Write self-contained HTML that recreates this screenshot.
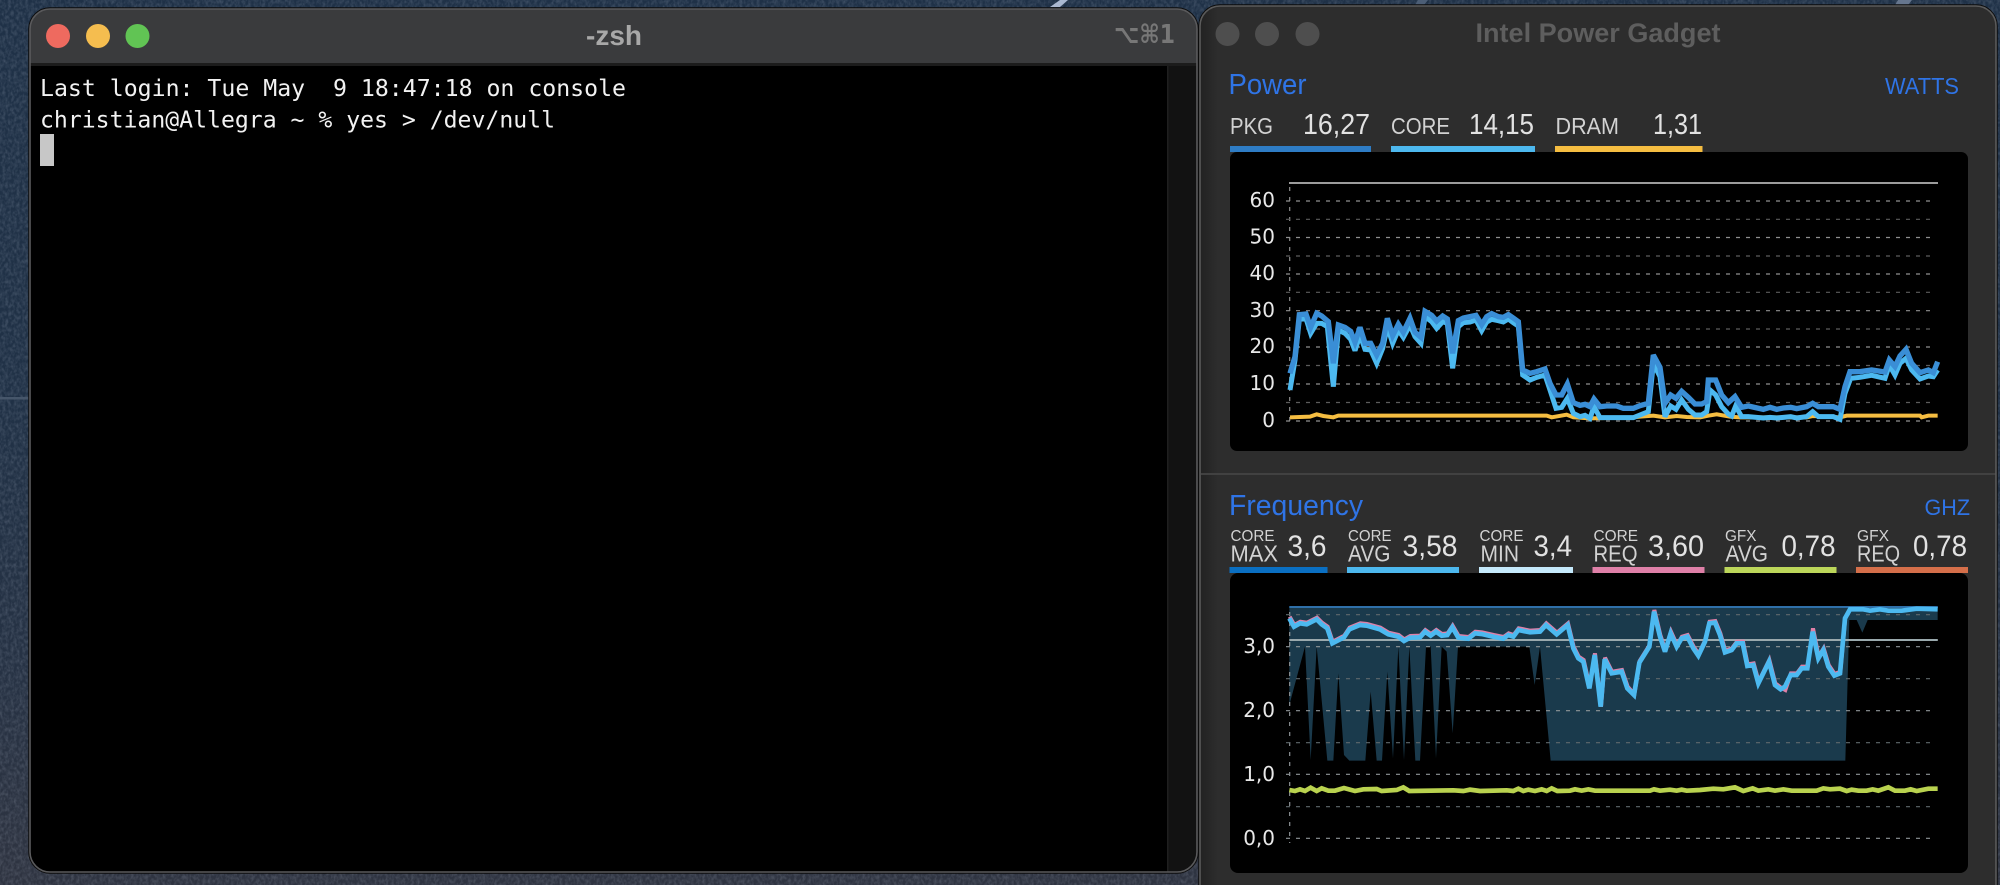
<!DOCTYPE html>
<html><head><meta charset="utf-8"><title>Terminal and Intel Power Gadget</title>
<style>
html,body{margin:0;padding:0;width:2000px;height:885px;overflow:hidden;background:#27364a}
svg{display:block}
.s{font-family:"Liberation Sans",sans-serif}
.d{font-family:"DejaVu Sans",sans-serif}
.m{font-family:"DejaVu Sans Mono","Liberation Mono",monospace;white-space:pre}
.ax{font-family:"DejaVu Sans",sans-serif;font-size:20px;fill:#e8e8e8;text-anchor:end}
.bl{fill:#2f74e6}
.lb{fill:#d2d2d2}
.vl{fill:#e2e2e2}
</style></head><body>
<svg xmlns="http://www.w3.org/2000/svg" width="2000" height="885" viewBox="0 0 2000 885">
<defs>
<linearGradient id="bg" x1="0" y1="0" x2="0" y2="1">
<stop offset="0" stop-color="#1f3147"/><stop offset=".45" stop-color="#203146"/><stop offset=".75" stop-color="#263244"/><stop offset="1" stop-color="#2f3441"/>
</linearGradient>
<linearGradient id="lft" x1="0" y1="0" x2="1" y2="0">
<stop offset="0" stop-color="#222" /><stop offset="1" stop-color="#2d2d2d"/>
</linearGradient>
<filter id="n" x="0" y="0" width="100%" height="100%">
<feTurbulence type="fractalNoise" baseFrequency=".35 .25" numOctaves="3" seed="4"/>
<feColorMatrix values="0 0 0 0 .65  0 0 0 0 .72  0 0 0 0 .85  1.6 0 0 0 -.55"/>
</filter>
<clipPath id="tw"><rect x="30" y="9" width="1167" height="863" rx="20"/></clipPath>
<clipPath id="pw"><rect x="1200" y="6" width="796" height="900" rx="20"/></clipPath>
</defs>

<!-- desktop -->
<rect width="2000" height="885" fill="url(#bg)"/>
<rect width="2000" height="885" filter="url(#n)" opacity=".2"/>
<rect x="0" y="397" width="30" height="2.5" fill="#46566a"/>
<path d="M1050 7L1060 0H1068L1060 7Z" fill="#aab8d0"/>
<path d="M1895 5L1898 0H1912L1908 5Z" fill="#66768e"/>
<path d="M1415 5L1418 0H1428L1424 5Z" fill="#4c5e76"/>

<!-- terminal window -->
<rect x="29" y="8" width="1169" height="865" rx="21" fill="none" stroke="#0c0c0c" stroke-width="1.5"/>
<g clip-path="url(#tw)">
<rect x="30" y="9" width="1167" height="863" fill="#000"/>
<rect x="30" y="9" width="1167" height="55" fill="#3a3b3d"/>
<rect x="30" y="63" width="1167" height="3" fill="#1c1c1c"/>
<rect x="1168" y="66" width="29" height="806" fill="#121212"/>
<rect x="1167" y="66" width="1.5" height="806" fill="#1f1f1f"/>
</g>
<rect x="30" y="9" width="1167" height="863" rx="20" fill="none" stroke="#5a5a5c" stroke-width="1.6"/>
<circle cx="58" cy="36" r="12" fill="#ee6a5f"/>
<circle cx="98" cy="36" r="12" fill="#f5bd4f"/>
<circle cx="137.5" cy="36" r="12" fill="#61c454"/>
<text class="s" x="586" y="45" font-size="28" font-weight="700" fill="#a8a8a8" textLength="56" lengthAdjust="spacingAndGlyphs">-zsh</text>
<text class="d" x="1114" y="43" font-size="26" font-weight="700" fill="#777" textLength="61" lengthAdjust="spacingAndGlyphs">⌥⌘1</text>
<text class="m" x="40" y="96" font-size="23.2" fill="#f2f2f2" textLength="586" lengthAdjust="spacingAndGlyphs">Last login: Tue May  9 18:47:18 on console</text>
<text class="m" x="40" y="127.500" font-size="23.2" fill="#f2f2f2" textLength="515" lengthAdjust="spacingAndGlyphs">christian@Allegra ~ % yes &gt; /dev/null</text>
<rect x="40" y="134" width="14" height="32" fill="#c7c7c7"/>

<!-- power gadget window -->
<rect x="1199" y="5" width="798" height="900" rx="21" fill="none" stroke="#0c0c0c" stroke-width="1.5"/>
<g clip-path="url(#pw)">
<rect x="1200" y="6" width="796" height="900" fill="#2d2d2d"/>
<rect x="1200" y="6" width="18" height="900" fill="url(#lft)"/>
<rect x="1201" y="473" width="795" height="2" fill="#414141"/>
</g>
<rect x="1200" y="6" width="796" height="900" rx="20" fill="none" stroke="#5b5b5b" stroke-width="1.6"/>
<circle cx="1227.500" cy="34" r="12" fill="#4e4e4e"/>
<circle cx="1267" cy="34" r="12" fill="#4e4e4e"/>
<circle cx="1307.500" cy="34" r="12" fill="#4e4e4e"/>
<text class="s" x="1475.500" y="42" font-size="26.500" font-weight="700" fill="#5e5e5e" textLength="245" lengthAdjust="spacingAndGlyphs">Intel Power Gadget</text>

<!-- power header -->
<text class="s bl" x="1228.500" y="94" font-size="28.500" textLength="78" lengthAdjust="spacingAndGlyphs">Power</text>
<text class="s bl" x="1885" y="94" font-size="23" textLength="74" lengthAdjust="spacingAndGlyphs">WATTS</text>
<text class="s lb" x="1230" y="134" font-size="23" textLength="43" lengthAdjust="spacingAndGlyphs">PKG</text>
<text class="s vl" x="1303" y="134" font-size="29" textLength="67" lengthAdjust="spacingAndGlyphs">16,27</text>
<text class="s lb" x="1391" y="134" font-size="23" textLength="59" lengthAdjust="spacingAndGlyphs">CORE</text>
<text class="s vl" x="1469" y="134" font-size="29" textLength="65" lengthAdjust="spacingAndGlyphs">14,15</text>
<text class="s lb" x="1555.500" y="134" font-size="23" textLength="63.500" lengthAdjust="spacingAndGlyphs">DRAM</text>
<text class="s vl" x="1653" y="134" font-size="29" textLength="49" lengthAdjust="spacingAndGlyphs">1,31</text>
<rect x="1230" y="146" width="141" height="6" fill="#2e7cc4"/>
<rect x="1391" y="146" width="144" height="6" fill="#4db8ee"/>
<rect x="1555" y="146" width="147.500" height="6" fill="#f5bd41"/>

<!-- power chart -->
<rect x="1230" y="152" width="738" height="299" rx="7" fill="#000"/>
<rect x="1289" y="182" width="649" height="2" fill="#9c9c9c"/>
<g stroke="#8f8f8f" stroke-width="1.200" stroke-dasharray="4 6" fill="none">
<path d="M1286 201H1933M1286 237.500H1933M1286 274H1933M1286 310.700H1933M1286 347H1933M1286 384H1933M1286 421H1933"/>
<path d="M1289.700 187V425"/>
</g>
<g stroke="#5c5c5c" stroke-width="1.200" stroke-dasharray="4 6" fill="none">
<path d="M1286 219.300H1933M1286 256H1933M1286 292.300H1933M1286 329H1933M1286 365.500H1933M1286 402.500H1933"/>
</g>
<g class="ax">
<text x="1275" y="207">60</text><text x="1275" y="243.500">50</text><text x="1275" y="280">40</text><text x="1275" y="317">30</text><text x="1275" y="353">20</text><text x="1275" y="390">10</text><text x="1275" y="427">0</text>
</g>
<g transform="translate(1220 220) scale(.33333)" fill="none" stroke-linejoin="miter" stroke-miterlimit="3">
<polyline stroke="#f5bd41" stroke-width="12" points="210,592 270,590 290,583 310,588 340,592 355,587 980,587 995,592 1040,584 1060,592 1110,595 1240,592 1260,590 1300,587 1335,592 1370,588 1400,591 1440,592 1465,587 1490,583 1530,590 1560,592 1650,592 1760,592 1778,588 1860,592 1880,587 2100,587 2105,592 2125,587 2153,587"/>
<polyline stroke="#4cb9f0" stroke-width="15" points="210,510 225,420 238,298 258,296 272,340 290,310 305,310 322,320 340,500 355,330 375,340 392,358 405,392 420,345 435,388 452,390 470,430 488,385 502,320 518,370 535,330 550,352 570,315 585,350 603,370 615,290 635,305 650,325 668,305 682,310 698,445 715,320 730,308 750,306 768,300 785,332 800,306 815,298 835,302 850,306 865,297 880,308 895,318 908,465 930,480 950,472 975,465 990,510 1008,565 1025,562 1042,535 1060,580 1080,590 1095,586 1110,595 1122,560 1140,593 1190,593 1240,593 1285,575 1300,430 1320,470 1335,590 1352,558 1368,568 1385,540 1405,568 1425,585 1445,585 1460,575 1470,510 1487,525 1505,560 1525,582 1535,588 1547,558 1565,590 1585,590 1630,594 1650,592 1670,594 1690,592 1712,590 1730,594 1760,590 1778,575 1795,590 1840,590 1860,598 1875,520 1892,475 1920,472 1955,466 1995,475 2008,435 2025,465 2040,430 2058,415 2075,450 2100,477 2125,468 2140,470 2153,450"/>
<polyline stroke="#3a8ed6" stroke-width="16" points="210,460 225,410 238,284 258,282 272,322 290,280 305,288 325,305 340,430 355,315 375,322 392,334 405,367 420,322 435,370 452,370 470,405 488,370 502,295 518,347 535,313 550,337 570,295 585,337 603,352 615,274 635,286 650,303 668,288 682,297 698,400 715,302 730,294 750,290 768,286 785,314 800,290 815,281 835,290 850,292 865,284 880,294 895,305 908,450 930,460 950,455 975,447 990,490 1008,525 1025,525 1042,492 1060,548 1080,556 1095,553 1110,560 1122,537 1140,560 1160,558 1190,558 1210,565 1240,565 1260,557 1285,550 1300,405 1320,442 1335,550 1352,525 1368,535 1385,514 1405,532 1425,552 1445,552 1460,545 1465,480 1487,480 1505,525 1525,548 1545,530 1565,562 1585,558 1630,568 1650,562 1670,568 1690,564 1712,562 1730,566 1760,560 1778,550 1795,560 1840,560 1860,568 1875,500 1890,455 1920,455 1955,450 1995,456 2008,420 2025,440 2040,408 2058,388 2075,430 2100,458 2125,450 2140,458 2153,425"/>
</g>

<!-- frequency header -->
<text class="s bl" x="1229" y="515" font-size="28.500" textLength="134" lengthAdjust="spacingAndGlyphs">Frequency</text>
<text class="s bl" x="1924.500" y="515" font-size="22" textLength="45.500" lengthAdjust="spacingAndGlyphs">GHZ</text>

<g class="s lb">
<text x="1230.500" y="541" font-size="16" textLength="44" lengthAdjust="spacingAndGlyphs">CORE</text>
<text x="1230.500" y="561.500" font-size="23" textLength="47.500" lengthAdjust="spacingAndGlyphs">MAX</text>
<text x="1348" y="541" font-size="16" textLength="43.500" lengthAdjust="spacingAndGlyphs">CORE</text>
<text x="1348" y="561.500" font-size="23" textLength="42.500" lengthAdjust="spacingAndGlyphs">AVG</text>
<text x="1479.500" y="541" font-size="16" textLength="44" lengthAdjust="spacingAndGlyphs">CORE</text>
<text x="1480.500" y="561.500" font-size="23" textLength="38.500" lengthAdjust="spacingAndGlyphs">MIN</text>
<text x="1593.500" y="541" font-size="16" textLength="44.500" lengthAdjust="spacingAndGlyphs">CORE</text>
<text x="1593.500" y="561.500" font-size="23" textLength="44" lengthAdjust="spacingAndGlyphs">REQ</text>
<text x="1725" y="541" font-size="16" textLength="31.500" lengthAdjust="spacingAndGlyphs">GFX</text>
<text x="1725.500" y="561.500" font-size="23" textLength="42.500" lengthAdjust="spacingAndGlyphs">AVG</text>
<text x="1857" y="541" font-size="16" textLength="32" lengthAdjust="spacingAndGlyphs">GFX</text>
<text x="1857" y="561.500" font-size="23" textLength="43" lengthAdjust="spacingAndGlyphs">REQ</text>
</g>
<g class="s vl">
<text x="1287.500" y="556" font-size="30" textLength="39" lengthAdjust="spacingAndGlyphs">3,6</text>
<text x="1402.500" y="556" font-size="30" textLength="55" lengthAdjust="spacingAndGlyphs">3,58</text>
<text x="1533.500" y="556" font-size="30" textLength="38.500" lengthAdjust="spacingAndGlyphs">3,4</text>
<text x="1648" y="556" font-size="30" textLength="56" lengthAdjust="spacingAndGlyphs">3,60</text>
<text x="1781.500" y="556" font-size="30" textLength="54" lengthAdjust="spacingAndGlyphs">0,78</text>
<text x="1913" y="556" font-size="30" textLength="54" lengthAdjust="spacingAndGlyphs">0,78</text>
</g>
<rect x="1229.500" y="567" width="98" height="6" fill="#0a6fc2"/>
<rect x="1347" y="567" width="112" height="6" fill="#4db8ee"/>
<rect x="1479" y="567" width="94" height="6" fill="#c5e9fb"/>
<rect x="1592.500" y="567" width="112" height="6" fill="#df80a8"/>
<rect x="1724.500" y="567" width="112" height="6" fill="#bcd65a"/>
<rect x="1856" y="567" width="112" height="6" fill="#d56f4a"/>

<!-- frequency chart -->
<rect x="1230" y="573" width="738" height="300" rx="8" fill="#000"/>
<g transform="translate(1220 590) scale(.33333)">
<polygon fill="#1a3a4c" points="208,50 208,345 255,170 272,510 290,170 322,512 340,512 355,250 372,495 388,512 436,512 452,305 470,512 486,512 502,245 519,505 535,170 552,510 568,170 586,512 600,512 618,170 632,170 648,505 665,170 680,185 698,430 714,170 928,170 944,285 960,170 992,512 1876,512 1888,90 1910,90 1927,128 1943,90 2153,90 2153,50"/>
</g>
<g stroke="#8f9598" stroke-width="1.200" stroke-dasharray="4 6" fill="none">
<path d="M1286 646.700H1933M1286 710.700H1933M1286 774.300H1933M1286 838.300H1933"/>
<path d="M1289.700 612V843"/>
</g>
<g stroke="#5f686c" stroke-width="1.200" stroke-dasharray="4 6" fill="none">
<path d="M1286 614.700H1933M1286 678.700H1933M1286 742.700H1933M1286 806.700H1933"/>
</g>
<g class="ax">
<text x="1275" y="653">3,0</text><text x="1275" y="717">2,0</text><text x="1275" y="781">1,0</text><text x="1275" y="845">0,0</text>
</g>
<rect x="1289.300" y="606" width="648.500" height="2" fill="#2f6fa8"/>
<rect x="1289.300" y="639" width="648.500" height="2" fill="#9aa9ad"/>
<g transform="translate(1220 590) scale(.33333)" fill="none" stroke-miterlimit="3">
<polyline stroke="#b9d24f" stroke-width="14" points="208,600 225,603 240,598 255,603 272,593 290,603 305,595 325,602 345,602 372,594 405,603 430,598 470,597 485,603 530,600 550,592 568,603 700,601 730,603 750,599 780,603 860,601 880,603 895,596 910,603 925,599 945,603 965,598 980,603 995,595 1012,603 1050,602 1065,598 1085,602 1105,598 1125,602 1290,602 1302,598 1320,602 1350,599 1370,602 1385,599 1400,602 1440,600 1480,596 1510,598 1545,592 1570,603 1598,595 1615,602 1645,598 1665,602 1690,598 1715,602 1790,602 1810,595 1830,598 1860,596 1880,603 1895,599 1915,602 1940,602 1958,598 1975,602 2005,592 2025,602 2055,602 2072,598 2090,603 2125,596 2153,596"/>
<polyline stroke="#df80a8" stroke-width="12" transform="translate(1 -5)" points="208,85 222,110 240,100 260,103 290,88 305,103 322,115 337,160 372,142 388,118 420,105 440,107 480,118 505,133 535,140 552,153 570,143 600,142 615,125 632,137 648,125 665,137 682,135 697,112 715,143 745,146 765,130 785,132 820,140 850,146 865,135 880,140 895,120 930,127 960,125 978,105 1010,133 1043,105 1060,175 1075,205 1090,215 1108,295 1124,195 1142,355 1154,208 1175,250 1205,245 1222,295 1242,318 1258,218 1288,170 1302,65 1320,140 1335,185 1352,130 1370,170 1385,145 1402,140 1420,175 1435,197 1455,155 1468,100 1485,98 1500,135 1515,187 1535,180 1550,160 1568,160 1582,228 1600,225 1615,280 1647,215 1665,285 1682,298 1695,305 1712,255 1730,255 1745,235 1762,235 1778,120 1795,205 1810,180 1825,230 1843,257 1860,250 1875,85"/>
<polyline stroke="#4cb9f0" stroke-width="14" points="208,85 222,110 240,100 260,103 290,88 305,103 322,115 337,160 372,142 388,118 420,105 440,107 480,118 505,133 535,140 552,153 570,143 600,142 615,125 632,137 648,125 665,137 682,135 697,112 715,143 745,146 765,130 785,132 820,140 850,146 865,135 880,140 895,120 930,127 960,125 978,105 1010,133 1043,105 1060,175 1075,205 1090,215 1108,295 1124,195 1142,350 1154,208 1175,250 1205,245 1222,295 1242,315 1258,218 1288,170 1302,65 1320,140 1335,185 1352,130 1370,170 1385,145 1402,140 1420,175 1435,197 1455,155 1468,100 1485,98 1500,135 1515,187 1535,180 1550,160 1568,160 1582,228 1600,225 1615,280 1647,215 1665,285 1682,298 1695,290 1712,255 1730,255 1745,235 1762,235 1778,125 1795,205 1810,180 1825,230 1843,257 1860,250 1875,85 1890,58 1930,58 1950,62 1980,58 2005,62 2045,62 2090,56 2153,58"/>
</g>
</svg>
</body></html>
